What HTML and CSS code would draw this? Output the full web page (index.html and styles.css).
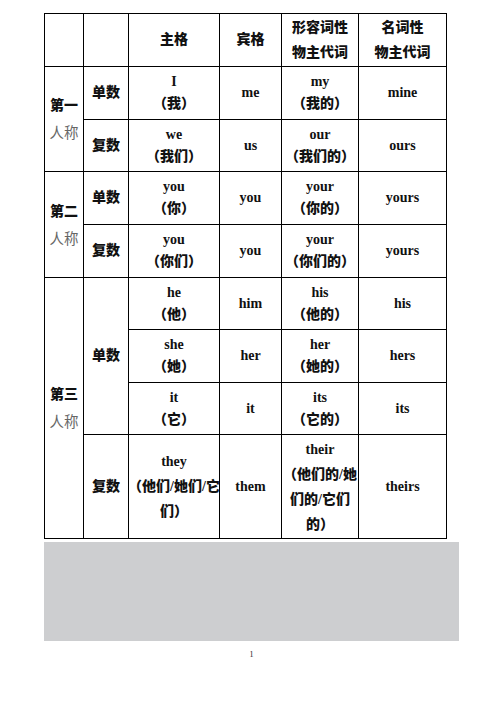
FILE: index.html
```html
<!DOCTYPE html>
<html lang="zh">
<head>
<meta charset="utf-8">
<title>人称代词表</title>
<link rel="stylesheet" href="styles.css">
</head>
<body>
<div class="page">
  <div class="grid">
    <div class="cell"></div>
    <div class="cell"></div>
    <div class="cell"><span class="t">主格</span></div>
    <div class="cell"><span class="t">宾格</span></div>
    <div class="cell tall"><span class="t">形容词性<br>物主代词</span></div>
    <div class="cell tall"><span class="t">名词性<br>物主代词</span></div>

    <div class="cell person r2"><span class="t"><span class="strong">第一</span><br><span class="light">人称</span></span></div>
    <div class="cell"><span class="t">单数</span></div>
    <div class="cell"><span class="t">I<br>（我）</span></div>
    <div class="cell"><span class="t">me</span></div>
    <div class="cell"><span class="t">my<br>（我的）</span></div>
    <div class="cell"><span class="t">mine</span></div>
    <div class="cell"><span class="t">复数</span></div>
    <div class="cell"><span class="t">we<br>（我们）</span></div>
    <div class="cell"><span class="t">us</span></div>
    <div class="cell"><span class="t">our<br>（我们的）</span></div>
    <div class="cell"><span class="t">ours</span></div>

    <div class="cell person r2"><span class="t"><span class="strong">第二</span><br><span class="light">人称</span></span></div>
    <div class="cell"><span class="t">单数</span></div>
    <div class="cell"><span class="t">you<br>（你）</span></div>
    <div class="cell"><span class="t">you</span></div>
    <div class="cell"><span class="t">your<br>（你的）</span></div>
    <div class="cell"><span class="t">yours</span></div>
    <div class="cell"><span class="t">复数</span></div>
    <div class="cell"><span class="t">you<br>（你们）</span></div>
    <div class="cell"><span class="t">you</span></div>
    <div class="cell"><span class="t">your<br>（你们的）</span></div>
    <div class="cell"><span class="t">yours</span></div>

    <div class="cell person r4"><span class="t"><span class="strong">第三</span><br><span class="light">人称</span></span></div>
    <div class="cell r3"><span class="t">单数</span></div>
    <div class="cell"><span class="t">he<br>（他）</span></div>
    <div class="cell"><span class="t">him</span></div>
    <div class="cell"><span class="t">his<br>（他的）</span></div>
    <div class="cell"><span class="t">his</span></div>
    <div class="cell"><span class="t">she<br>（她）</span></div>
    <div class="cell"><span class="t">her</span></div>
    <div class="cell"><span class="t">her<br>（她的）</span></div>
    <div class="cell"><span class="t">hers</span></div>
    <div class="cell"><span class="t">it<br>（它）</span></div>
    <div class="cell"><span class="t">it</span></div>
    <div class="cell"><span class="t">its<br>（它的）</span></div>
    <div class="cell"><span class="t">its</span></div>
    <div class="cell"><span class="t">复数</span></div>
    <div class="cell tall"><span class="t">they<br>（他们/她们/它<br>们）</span></div>
    <div class="cell"><span class="t">them</span></div>
    <div class="cell tall"><span class="t">their<br>（他们的/她<br>们的/它们<br>的）</span></div>
    <div class="cell"><span class="t">theirs</span></div>
  </div>
  <div class="shade"></div>
  <div class="pagenum">1</div>
</div>
</body>
</html>
```

FILE: styles.css
```css
html, body {
  margin: 0;
  padding: 0;
  background: #ffffff;
}

.page {
  padding: 13px 0 0 44px;
  width: 415px;
}

.grid {
  display: grid;
  grid-template-columns: 38px 44px 90px 61px 76px 87px;
  grid-template-rows: 52px 52px 51px 52px 52px 51px 52px 51px 103px;
  gap: 1px;
  padding: 1px;
  width: 403px;
  box-sizing: border-box;
  background: #000000;
  font-family: "Liberation Serif", "Noto Sans CJK SC", serif;
  font-weight: 900;
  font-size: 14px;
  color: #111111;
}

.cell {
  background: #ffffff;
  display: flex;
  flex-direction: column;
  align-items: center;
  justify-content: center;
  text-align: center;
  white-space: nowrap;
  line-height: 22px;
}

.t {
  display: block;
}

.tall {
  line-height: 25px;
}

.person {
  line-height: 26px;
}

.r2 { grid-row: span 2; }
.r3 { grid-row: span 3; }
.r4 { grid-row: span 4; }

.strong {
  font-family: "Noto Sans CJK SC", sans-serif;
  font-weight: 900;
  color: #111111;
}

.light {
  font-family: "Noto Sans CJK SC", sans-serif;
  font-weight: 400;
  font-size: 14.5px;
  color: #666666;
}

.shade {
  margin-top: 3px;
  width: 415px;
  height: 99px;
  background: #cdced0;
}

.pagenum {
  margin-top: 9px;
  text-align: center;
  font-family: "Liberation Serif", serif;
  font-size: 8px;
  line-height: 10px;
  color: #222222;
}
```
